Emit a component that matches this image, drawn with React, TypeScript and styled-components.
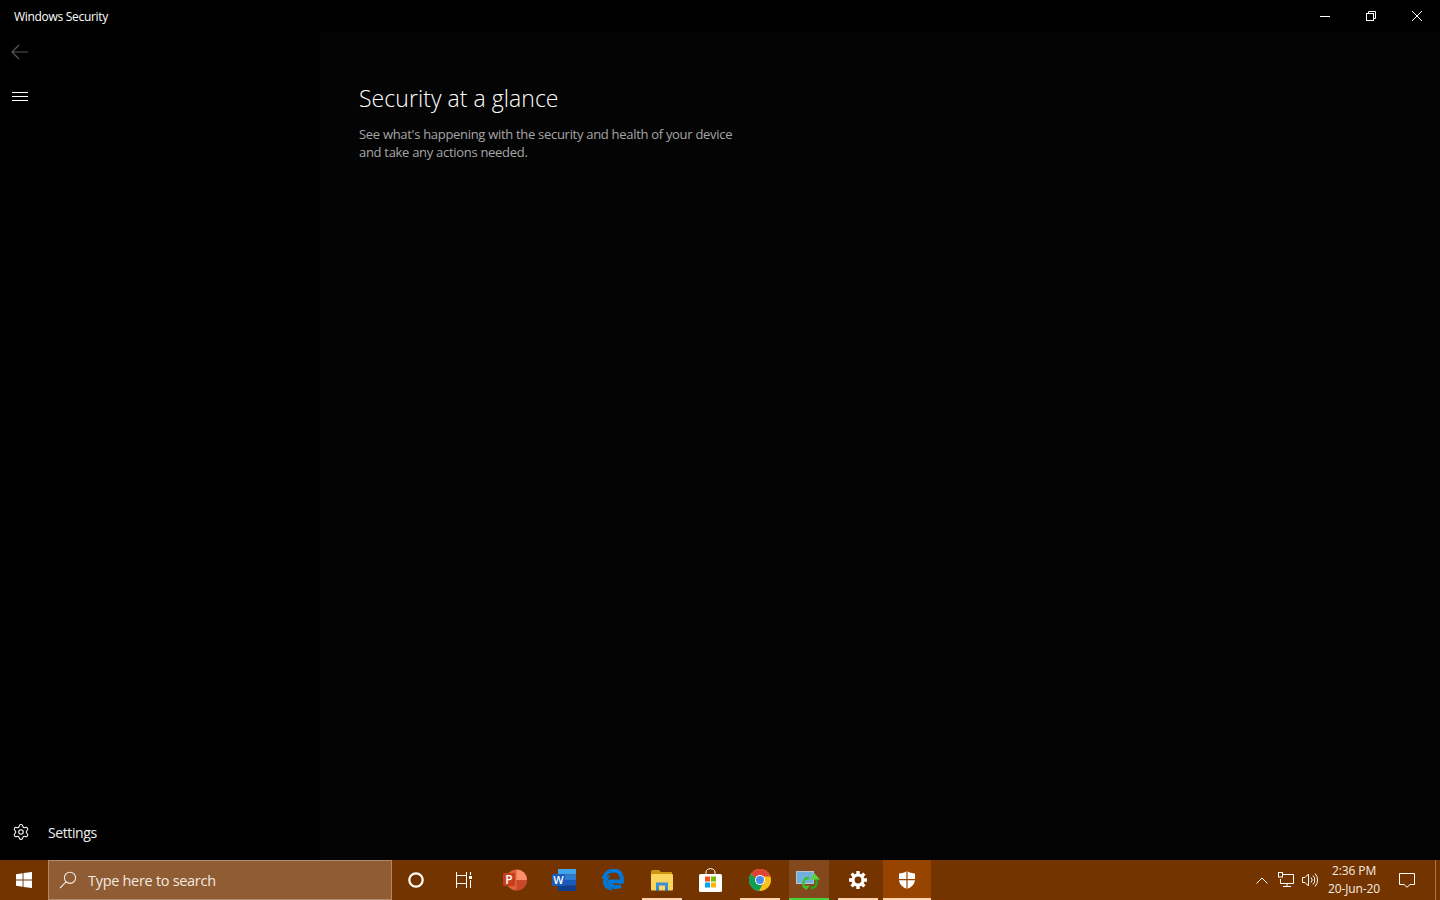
import React from 'react';
import styled, { createGlobalStyle } from 'styled-components';
import { Settings } from 'lucide-react';

const GlobalStyle = createGlobalStyle`
  html, body {
    margin: 0;
    padding: 0;
    background: #000;
  }
  body {
    font-family: "Open Sans", "Noto Sans", "Liberation Sans", sans-serif;
    -webkit-font-smoothing: auto;
  }
  * {
    box-sizing: border-box;
  }
`;

const Screen = styled.div`
  width: 1440px;
  height: 900px;
  display: flex;
  flex-direction: column;
  overflow: hidden;
`;

const AppWindow = styled.div`
  flex: 1;
  min-height: 0;
  display: flex;
  flex-direction: column;
  background: #000;
`;

const TitleBar = styled.div`
  height: 32px;
  flex: none;
  display: flex;
  align-items: center;
  justify-content: space-between;
  padding-left: 14px;
  color: #fff;
`;

const TitleText = styled.span`
  font-size: 12px;
  letter-spacing: -0.3px;
`;

const WindowControls = styled.div`
  display: flex;
`;

const WindowButton = styled.div`
  width: 46px;
  height: 32px;
  display: flex;
  align-items: center;
  justify-content: center;
`;

const Body = styled.div`
  flex: 1;
  min-height: 0;
  display: grid;
  grid-template-columns: 320px 1fr;
`;

const Sidebar = styled.nav`
  display: flex;
  flex-direction: column;
  padding-bottom: 4px;
`;

const NavIcon = styled.div<{ $gap?: number }>`
  width: 40px;
  height: 40px;
  margin-bottom: ${(p) => p.$gap ?? 0}px;
  display: flex;
  align-items: center;
  justify-content: center;
`;

const SettingsRow = styled.div`
  margin-top: auto;
  height: 48px;
  display: flex;
  align-items: center;
  color: #f0f0f0;
  font-size: 14px;
  letter-spacing: -0.4px;
`;

const SettingsIcon = styled.div`
  width: 48px;
  padding-left: 12px;
  display: flex;
  align-items: center;
`;

const Content = styled.main`
  background: #040404;
  padding: 49px 0 0 39px;
`;

const Heading = styled.h1`
  margin: 0 0 10px;
  color: #fff;
  font-size: 23px;
  line-height: 34px;
  font-weight: 300;
  letter-spacing: 0.05px;
`;

const Description = styled.p`
  margin: 0;
  width: 400px;
  color: #a6a6a6;
  font-size: 13px;
  line-height: 18px;
  letter-spacing: -0.3px;
`;

const Taskbar = styled.footer`
  height: 40px;
  flex: none;
  display: flex;
  align-items: stretch;
  background: #733400;
`;

const StartButton = styled.div`
  width: 48px;
  display: flex;
  align-items: center;
  justify-content: center;
`;

const SearchBox = styled.div`
  width: 344px;
  display: flex;
  align-items: center;
  padding-left: 10px;
  gap: 11px;
  background: #8f5c33;
  border: 1px solid #b08a6a;
  color: #f3e9e0;
  font-size: 14.5px;
  letter-spacing: -0.3px;
`;

const ShellButton = styled.div`
  width: 48px;
  display: flex;
  align-items: center;
  justify-content: center;
`;

const AppList = styled.div`
  display: flex;
  margin-left: 2px;
`;

const AppSlot = styled.div`
  width: 49px;
  display: flex;
  justify-content: center;
`;

const AppButton = styled.div<{ $state?: 'open' | 'busy' | 'active' }>`
  position: relative;
  width: ${(p) => (p.$state === 'active' ? '48px' : '40px')};
  display: flex;
  align-items: center;
  justify-content: center;
  background: ${(p) =>
    p.$state === 'active' ? '#964400' : p.$state === 'busy' ? '#84481d' : 'transparent'};

  &::after {
    content: '';
    display: ${(p) => (p.$state ? 'block' : 'none')};
    position: absolute;
    left: 0;
    right: 0;
    bottom: 0;
    height: 2px;
    background: ${(p) => (p.$state === 'busy' ? '#4cd137' : '#ffd3b0')};
  }
`;

const Tray = styled.div`
  margin-left: auto;
  display: flex;
  align-items: center;
  color: #fff;
`;

const TrayIcon = styled.div<{ $w: number }>`
  width: ${(p) => p.$w}px;
  display: flex;
  align-items: center;
  justify-content: center;
`;

const Clock = styled.div`
  width: 64px;
  margin-right: 7px;
  display: flex;
  flex-direction: column;
  align-items: center;
  white-space: nowrap;
  font-size: 12px;
  line-height: 18px;
  letter-spacing: -0.1px;
  color: #f6ece4;
`;

const ShowDesktop = styled.div`
  width: 5px;
  height: 40px;
  margin-left: 14px;
  border-left: 1px solid #a5764f;
`;

const BackIcon = () => (
  <svg width="18" height="16" viewBox="0 0 18 16" fill="none" stroke="#585858" strokeWidth="1.2">
    <path d="M1 8H17M8 1L1 8L8 15" />
  </svg>
);

const MenuIcon = () => (
  <svg width="16" height="12" viewBox="0 0 16 12" stroke="#fff" strokeWidth="1">
    <path d="M0 2.5H16M0 6.5H16M0 10.5H16" />
  </svg>
);

const MinimizeIcon = () => (
  <svg width="10" height="10" viewBox="0 0 10 10" stroke="#fff" strokeWidth="1">
    <path d="M0 5.5H10" />
  </svg>
);

const RestoreIcon = () => (
  <svg width="10" height="10" viewBox="0 0 10 10" fill="none" stroke="#fff" strokeWidth="1">
    <rect x=".5" y="2.5" width="7" height="7" />
    <path d="M2.5 2.5V.5H9.5V7.5H7.5" />
  </svg>
);

const CloseIcon = () => (
  <svg width="10" height="10" viewBox="0 0 10 10" stroke="#fff" strokeWidth="1">
    <path d="M0 0L10 10M10 0L0 10" />
  </svg>
);

const WindowsLogo = () => (
  <svg width="16" height="16" viewBox="0 0 16 16" fill="#fff">
    <path d="M0 2.2L6.6 1.3V7.5H0ZM7.5 1.1L16 0V7.5H7.5ZM0 8.5H6.6V14.7L0 13.8ZM7.5 8.5H16V16L7.5 14.9Z" />
  </svg>
);

const SearchIcon = () => (
  <svg width="18" height="18" viewBox="0 0 18 18" fill="none" stroke="#f3e9e0" strokeWidth="1.1">
    <circle cx="11" cy="6.8" r="5.6" />
    <path d="M7 10.8L1 17" />
  </svg>
);

const CortanaIcon = () => (
  <svg width="16" height="16" viewBox="0 0 16 16" fill="none" stroke="#fff" strokeWidth="2.2">
    <circle cx="8" cy="8" r="6.7" />
  </svg>
);

const TaskViewIcon = () => (
  <svg width="16" height="16" viewBox="0 0 16 16" fill="none" stroke="#fff" strokeWidth="1">
    <path d="M.5 0V16M10.5 0V16M.5 3.5H10.5M.5 11.5H10.5" />
    <path d="M14.5 0V3M14.5 8V16" />
    <rect x="13" y="4" width="3" height="3" fill="#fff" stroke="none" />
  </svg>
);

const PowerPointIcon = () => (
  <svg width="24" height="22" viewBox="0 0 24 22">
    <circle cx="13.5" cy="11" r="10.5" fill="#e0603c" />
    <path d="M13.5 .5A10.5 10.5 0 0 1 24 11H13.5Z" fill="#ff8f6b" />
    <path d="M13.5 11H24A10.5 10.5 0 0 1 13.5 21.5Z" fill="#c9472a" />
    <rect x="0" y="4" width="12" height="13" rx="1" fill="#c43e1c" />
    <text x="6" y="15" textAnchor="middle" fontSize="12" fontWeight="600" fill="#fff" fontFamily="Open Sans">P</text>
  </svg>
);

const WordIcon = () => (
  <svg width="24" height="22" viewBox="0 0 24 22">
    <rect x="6" y="0" width="18" height="5.5" fill="#41a5ee" />
    <rect x="6" y="5.5" width="18" height="5.5" fill="#2b7cd3" />
    <rect x="6" y="11" width="18" height="5.5" fill="#185abd" />
    <rect x="6" y="16.5" width="18" height="5.5" fill="#103f91" />
    <rect x="0" y="5" width="13" height="12" rx="1" fill="#1a5cc0" />
    <text x="6.5" y="15" textAnchor="middle" fontSize="11" fontWeight="600" fill="#fff" fontFamily="Open Sans">W</text>
  </svg>
);

const EdgeIcon = () => (
  <svg width="22" height="22" viewBox="0 0 22 22" fill="none">
    <path
      d="M1.5 10C3 4 8 1.5 12 1.5C17.5 1.5 20 6 20 12.5H7.5C7.5 17.5 13 19.5 19 17"
      stroke="#0078d7"
      strokeWidth="4"
    />
    <path d="M1 12C1 18 5 21.5 11 21.5L6 16C4.5 13 6 9 9 6C5 7 2 9 1 12Z" fill="#0078d7" />
  </svg>
);

const FolderIcon = () => (
  <svg width="22" height="23" viewBox="0 0 22 23">
    <path d="M0 3C0 2 .5 1 1.5 1H8L10 3H21V6H0Z" fill="#cf9410" />
    <rect x="0" y="5" width="22" height="16.5" rx="1" fill="#f9d55e" />
    <path d="M5 20V13.5H17V20H14V16.5H8V20Z" fill="#3a8fd6" />
    <rect x="5" y="20" width="3" height="2" fill="#2f77bb" />
    <rect x="14" y="20" width="3" height="2" fill="#2f77bb" />
  </svg>
);

const StoreIcon = () => (
  <svg width="23" height="24" viewBox="0 0 23 24">
    <path d="M7 7V4C7 2 9 .7 11.5 .7S16 2 16 4V7" fill="none" stroke="#fff" strokeWidth="1" />
    <rect x="0" y="6" width="23" height="18" rx="1.5" fill="#fff" />
    <rect x="6" y="8.5" width="5" height="5" fill="#f25022" />
    <rect x="12" y="8.5" width="5" height="5" fill="#7fba00" />
    <rect x="6" y="14.5" width="5" height="5" fill="#00a4ef" />
    <rect x="12" y="14.5" width="5" height="5" fill="#ffb900" />
  </svg>
);

const ChromeIcon = () => (
  <svg width="22" height="22" viewBox="0 0 22 22">
    <circle cx="11" cy="11" r="11" fill="#fbc116" />
    <path d="M2 4.7A11 11 0 0 1 21.5 7.5H11A4 4 0 0 0 7.2 10Z" fill="#db4437" />
    <path d="M2 4.7A11 11 0 0 0 10 22L14.4 13.6A4 4 0 0 1 7.2 10Z" fill="#109d58" />
    <circle cx="11" cy="11" r="5" fill="#fff" />
    <circle cx="11" cy="11" r="4" fill="#4a8af4" />
  </svg>
);

const SyncAppIcon = () => (
  <svg width="25" height="20" viewBox="0 0 25 20">
    <rect x="0" y="1" width="18" height="13" fill="#b9c4cc" />
    <rect x="1" y="2" width="16" height="11" fill="#6fb0dc" />
    <path d="M10.5 18.5A5.5 5.5 0 0 1 13 8" fill="none" stroke="#3fc02c" strokeWidth="2.4" />
    <path d="M7 16L14 15.5L10.5 20Z" fill="#3fc02c" />
    <path d="M17.5 7.5A5.5 5.5 0 0 1 15 18" fill="none" stroke="#2ba71c" strokeWidth="2.4" />
    <path d="M18 3L24 9.5H14Z" fill="#59d63f" />
  </svg>
);

const SolidGear = () => (
  <svg width="18" height="18" viewBox="0 0 18 18" fill="none" stroke="#fff">
    <circle cx="9" cy="9" r="5" strokeWidth="3.2" />
    {[0, 45, 90, 135].map((a) => (
      <path key={a} d="M9 0V18" strokeWidth="3.4" strokeDasharray="3 12 3" transform={`rotate(${a} 9 9)`} />
    ))}
  </svg>
);

const ShieldIcon = () => (
  <svg width="16" height="18" viewBox="0 0 16 18" fill="#fff">
    <path d="M7.4 .3C5.5 1.6 3 2.4 0 2.5V8H7.4ZM8.6 .3V8H16V2.5C13 2.4 10.5 1.6 8.6 .3ZM0 9.2C.4 13 3 16 7.4 17.7V9.2ZM8.6 9.2V17.7C13 16 15.6 13 16 9.2Z" />
  </svg>
);

const ChevronIcon = () => (
  <svg width="12" height="7" viewBox="0 0 12 7" fill="none" stroke="#fff" strokeWidth="1">
    <path d="M.5 6.5L6 1L11.5 6.5" />
  </svg>
);

const NetworkIcon = () => (
  <svg width="16" height="16" viewBox="0 0 16 16" fill="none" stroke="#fff" strokeWidth="1">
    <path d="M4 2.5H15.5V11.5H2.5V7" />
    <path d="M9 11.5V14.5M5 14.5H13" />
    <rect x=".5" y=".5" width="4" height="4.5" fill="#733400" />
  </svg>
);

const VolumeIcon = () => (
  <svg width="16" height="16" viewBox="0 0 16 16" fill="none" stroke="#fff" strokeWidth="1">
    <path d="M.5 5.5H3L6.5 2V14L3 10.5H.5Z" />
    <path d="M9 5.5A3.5 3.5 0 0 1 9 10.5M11 3.5A6.5 6.5 0 0 1 11 12.5M13 1.5A9.5 9.5 0 0 1 13 14.5" />
  </svg>
);

const NotificationIcon = () => (
  <svg width="16" height="15" viewBox="0 0 16 15" fill="none" stroke="#fff" strokeWidth="1">
    <path d="M.5 .5H15.5V11.5H11L8 14.3L5 11.5H.5Z" />
  </svg>
);

const apps: { key: string; icon: React.ReactNode; state?: 'open' | 'busy' | 'active' }[] = [
  { key: 'powerpoint', icon: <PowerPointIcon /> },
  { key: 'word', icon: <WordIcon /> },
  { key: 'edge', icon: <EdgeIcon /> },
  { key: 'explorer', icon: <FolderIcon />, state: 'open' },
  { key: 'store', icon: <StoreIcon /> },
  { key: 'chrome', icon: <ChromeIcon />, state: 'open' },
  { key: 'sync', icon: <SyncAppIcon />, state: 'busy' },
  { key: 'settings', icon: <SolidGear />, state: 'open' },
  { key: 'security', icon: <ShieldIcon />, state: 'active' },
];

export default function App() {
  return (
    <>
      <GlobalStyle />
      <Screen>
        <AppWindow>
          <TitleBar>
            <TitleText>Windows Security</TitleText>
            <WindowControls>
              <WindowButton><MinimizeIcon /></WindowButton>
              <WindowButton><RestoreIcon /></WindowButton>
              <WindowButton><CloseIcon /></WindowButton>
            </WindowControls>
          </TitleBar>
          <Body>
            <Sidebar>
              <NavIcon $gap={4}><BackIcon /></NavIcon>
              <NavIcon><MenuIcon /></NavIcon>
              <SettingsRow>
                <SettingsIcon>
                  <Settings size={18} strokeWidth={1.4} color="#ffffff" />
                </SettingsIcon>
                Settings
              </SettingsRow>
            </Sidebar>
            <Content>
              <Heading>Security at a glance</Heading>
              <Description>
                See what's happening with the security and health of your device
                <br />
                and take any actions needed.
              </Description>
            </Content>
          </Body>
        </AppWindow>
        <Taskbar>
          <StartButton><WindowsLogo /></StartButton>
          <SearchBox>
            <SearchIcon />
            Type here to search
          </SearchBox>
          <ShellButton><CortanaIcon /></ShellButton>
          <ShellButton><TaskViewIcon /></ShellButton>
          <AppList>
            {apps.map((app) => (
              <AppSlot key={app.key}>
                <AppButton $state={app.state}>{app.icon}</AppButton>
              </AppSlot>
            ))}
          </AppList>
          <Tray>
            <TrayIcon $w={24}><ChevronIcon /></TrayIcon>
            <TrayIcon $w={24}><NetworkIcon /></TrayIcon>
            <TrayIcon $w={24}><VolumeIcon /></TrayIcon>
            <Clock>
              <span>2:36 PM</span>
              <span>20-Jun-20</span>
            </Clock>
            <TrayIcon $w={28}><NotificationIcon /></TrayIcon>
            <ShowDesktop />
          </Tray>
        </Taskbar>
      </Screen>
    </>
  );
}
